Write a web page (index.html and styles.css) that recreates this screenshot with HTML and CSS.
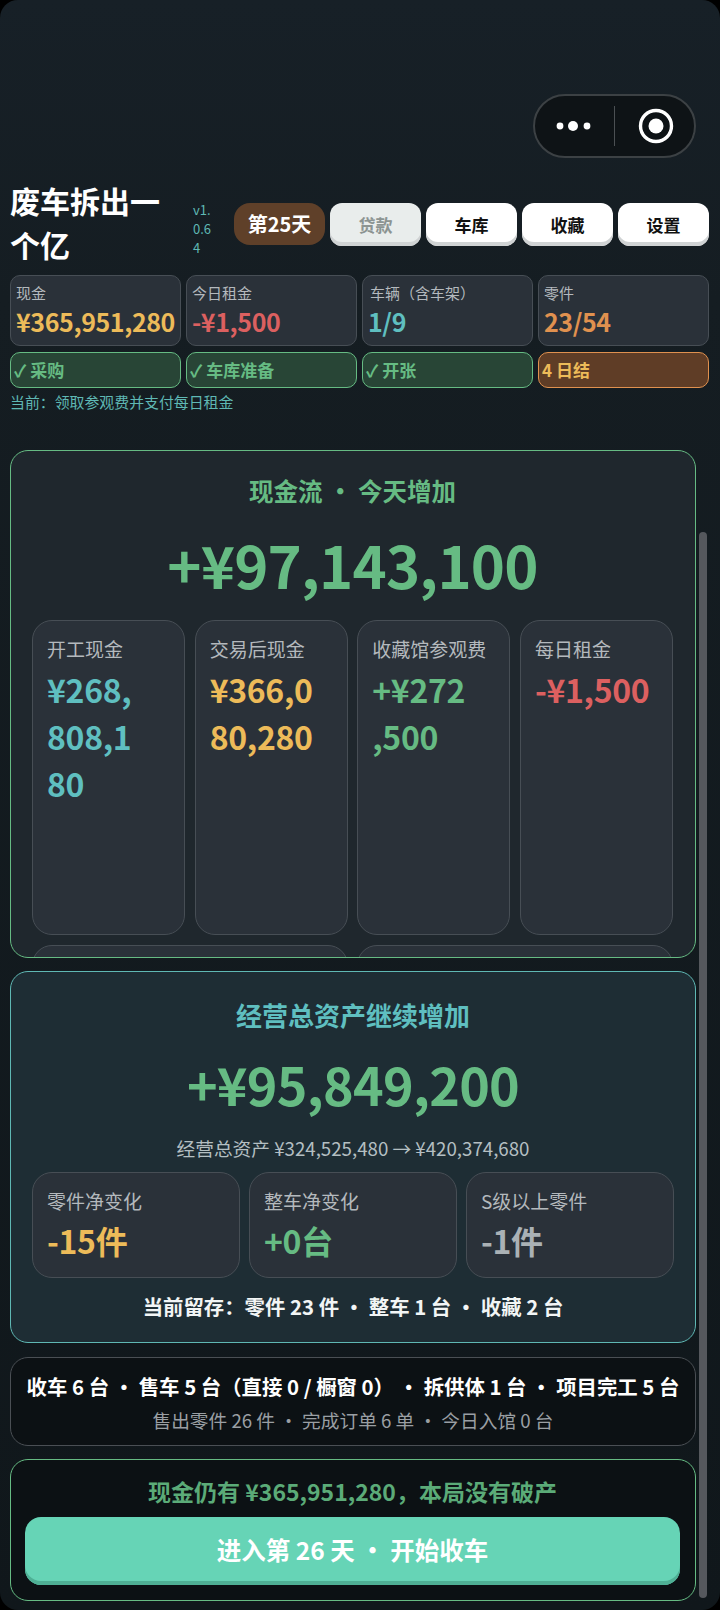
FILE: index.html
```html
<!DOCTYPE html>
<html lang="zh">
<head>
  <meta charset="utf-8">
  <title>废车拆出一个亿</title>
  <link rel="stylesheet" href="styles.css">
</head>
<body>
  <div class="app">
    <div class="capsule">
      <svg class="capsule-dots" width="36" height="14" viewBox="0 0 36 14"><circle cx="4" cy="7" r="3.4"/><circle cx="17" cy="7" r="5"/><circle cx="31" cy="7" r="3.4"/></svg>
      <span class="capsule-line"></span>
      <svg class="capsule-ring" width="36" height="36" viewBox="0 0 36 36"><circle cx="18" cy="18" r="15.5" fill="none" stroke="#fff" stroke-width="3.4"/><circle cx="18" cy="18" r="7.5" fill="#fff"/></svg>
    </div>

    <header class="topbar">
      <h1 class="title">废车拆出一个亿</h1>
      <span class="version">v1.0.64</span>
      <span class="day">第25天</span>
      <button class="top-btn off">贷款</button>
      <button class="top-btn">车库</button>
      <button class="top-btn">收藏</button>
      <button class="top-btn">设置</button>
    </header>

    <div class="stats">
      <div class="stat"><div class="stat-label">现金</div><div class="stat-value yellow">¥365,951,280</div></div>
      <div class="stat"><div class="stat-label">今日租金</div><div class="stat-value red">-¥1,500</div></div>
      <div class="stat"><div class="stat-label indent">车辆（含车架）</div><div class="stat-value teal">1/9</div></div>
      <div class="stat"><div class="stat-label">零件</div><div class="stat-value orange">23/54</div></div>
    </div>

    <div class="steps">
      <div class="step done">✓ 采购</div>
      <div class="step done">✓ 车库准备</div>
      <div class="step done">✓ 开张</div>
      <div class="step now">4 日结</div>
    </div>
    <p class="current">当前：领取参观费并支付每日租金</p>

    <section class="panel cash">
      <h2 class="panel-title green">现金流 · 今天增加</h2>
      <div class="big green">+¥97,143,100</div>
      <div class="cash-grid">
        <div class="card"><div class="card-label">开工现金</div><div class="card-value teal">¥268,<br>808,1<br>80</div></div>
        <div class="card"><div class="card-label">交易后现金</div><div class="card-value yellow">¥366,0<br>80,280</div></div>
        <div class="card"><div class="card-label">收藏馆参观费</div><div class="card-value green">+¥272<br>,500</div></div>
        <div class="card"><div class="card-label">每日租金</div><div class="card-value red">-¥1,500</div></div>
        <div class="card wide"></div>
        <div class="card wide"></div>
      </div>
    </section>

    <section class="panel assets">
      <h2 class="panel-title teal">经营总资产继续增加</h2>
      <div class="big small-big green">+¥95,849,200</div>
      <p class="assets-sub">经营总资产 ¥324,525,480 → ¥420,374,680</p>
      <div class="assets-grid">
        <div class="card"><div class="card-label">零件净变化</div><div class="card-value yellow">-15件</div></div>
        <div class="card"><div class="card-label">整车净变化</div><div class="card-value green">+0台</div></div>
        <div class="card"><div class="card-label">S级以上零件</div><div class="card-value grey">-1件</div></div>
      </div>
      <p class="assets-foot">当前留存：零件 23 件 · 整车 1 台 · 收藏 2 台</p>
    </section>

    <section class="panel summary">
      <p class="summary-main">收车 6 台 · 售车 5 台（直接 0 / 橱窗 0） · 拆供体 1 台 · 项目完工 5 台</p>
      <p class="summary-sub">售出零件 26 件 · 完成订单 6 单 · 今日入馆 0 台</p>
    </section>

    <section class="panel next">
      <p class="next-note">现金仍有 ¥365,951,280，本局没有破产</p>
      <button class="next-btn">进入第 26 天 · 开始收车</button>
    </section>

    <div class="scrollbar"></div>
  </div>
</body>
</html>
```

FILE: styles.css
```css
* {
  box-sizing: border-box;
}
html, body {
  margin: 0;
  padding: 0;
  background: #000;
}
body {
  font-family: "Noto Sans CJK SC", "Noto Sans", sans-serif;
  color: #fff;
}
p, h1, h2 {
  margin: 0;
}
.app {
  position: relative;
  width: 720px;
  height: 1610px;
  padding: 94px 10px 0;
  overflow: hidden;
  border-radius: 18px;
  background: linear-gradient(#172027 0, #151d22 300px, #10171b 100%);
}
.capsule {
  display: flex;
  align-items: center;
  width: 163px;
  height: 64px;
  margin-left: 523px;
  padding: 0 0 0 21px;
  background: #0e1316;
  border: 2px solid #3c4144;
  border-radius: 32px;
}
.capsule-dots {
  fill: #fff;
}
.capsule-line {
  width: 1px;
  height: 40px;
  margin: 0 23px 0 22px;
  background: #4b5053;
}
.topbar {
  display: flex;
  align-items: center;
  height: 88px;
  margin-top: 22px;
}
.title {
  width: 171px;
  margin-bottom: 4px;
  padding-right: 10px;
  font-size: 30px;
  line-height: 44px;
  font-weight: 700;
}
.version {
  width: 30px;
  margin: 8px 11px 0 12px;
  padding-right: 8px;
  font-size: 13px;
  line-height: 19px;
  color: #5fb8b4;
  word-break: break-all;
}
.day {
  width: 91px;
  height: 42px;
  margin-right: 5px;
  line-height: 42px;
  text-align: center;
  font-size: 20px;
  font-weight: 700;
  color: #fff;
  background: #5f4029;
  border-radius: 16px;
}
.top-btn {
  width: 91px;
  height: 43px;
  margin-right: 5px;
  padding: 0;
  font-family: inherit;
  font-size: 17px;
  font-weight: 700;
  color: #111;
  background: #fff;
  border: none;
  border-radius: 12px;
  box-shadow: inset 0 -4px 0 #d0d3d4;
}
.top-btn:last-child {
  margin-right: 0;
}
.top-btn.off {
  color: #8c9492;
  background: #e9edec;
}
.stats, .steps {
  display: grid;
  grid-template-columns: repeat(4, 1fr);
  gap: 5px;
  width: 699px;
}
.stats {
  margin-top: 7px;
}
.stat {
  height: 71px;
  padding: 6px 0 0 5px;
  background: #2a3139;
  border: 1.5px solid #474e55;
  border-radius: 10px;
}
.stat-label {
  font-size: 15px;
  line-height: 22px;
  color: #b4b9bd;
}
.stat-label.indent {
  padding-left: 2px;
}
.stat-value {
  font-size: 25px;
  line-height: 34px;
  font-weight: 700;
  letter-spacing: -0.4px;
  white-space: nowrap;
}
.steps {
  margin-top: 6px;
}
.step {
  height: 36px;
  padding-left: 3px;
  font-size: 17px;
  line-height: 33px;
  font-weight: 700;
  border-radius: 10px;
  border: 1.5px solid;
}
.step.done {
  color: #66bb83;
  background: #284536;
  border-color: #66bb83;
}
.step.now {
  color: #edbb59;
  background: #5f3d26;
  border-color: #e0914f;
}
.current {
  margin-top: 4px;
  font-size: 14.9px;
  line-height: 20px;
  color: #5fb8b4;
}
.panel {
  width: 686px;
  border: 1.5px solid;
  border-radius: 18px;
}
.cash {
  height: 508px;
  margin-top: 38px;
  padding: 0 22px 0 21px;
  overflow: hidden;
  background: #1f272d;
  border-color: #66bb83;
}
.panel-title {
  text-align: center;
  font-size: 24.5px;
  font-weight: 700;
}
.cash .panel-title {
  margin-top: 22px;
  line-height: 36px;
}
.big {
  text-align: center;
  font-size: 58px;
  line-height: 80px;
  font-weight: 700;
  letter-spacing: -0.8px;
}
.cash .big {
  margin-top: 15px;
}
.cash-grid {
  display: grid;
  grid-template-columns: repeat(4, 1fr);
  grid-auto-rows: 315px;
  gap: 10px 9.5px;
  margin-top: 16px;
}
.card {
  padding: 14px 14px 0;
  background: #2a3139;
  border: 1.5px solid #474e55;
  border-radius: 20px;
}
.card.wide {
  grid-column: span 2;
}
.cash-grid .card:nth-child(n+5) {
  height: 60px;
}
.card-label {
  font-size: 19px;
  line-height: 27px;
  color: #b4b9bd;
}
.card-value {
  margin-top: 4px;
  font-size: 32px;
  line-height: 47px;
  font-weight: 700;
  letter-spacing: -0.3px;
}
.assets {
  height: 372px;
  margin-top: 13px;
  padding: 0 21px;
  background: #1e2d34;
  border-color: #5fb8b4;
}
.assets .panel-title {
  margin-top: 25px;
  font-size: 26px;
  line-height: 36px;
}
.small-big {
  margin-top: 11px;
  font-size: 52px;
  letter-spacing: -0.7px;
}
.assets-sub {
  margin-top: 10px;
  text-align: center;
  font-size: 18.7px;
  line-height: 28px;
  color: #b4bfc2;
}
.assets-grid {
  display: grid;
  grid-template-columns: repeat(3, 1fr);
  gap: 9px;
  margin-top: 10px;
}
.assets-grid .card {
  height: 106px;
  padding-top: 14px;
}
.assets-grid .card-value {
  margin-top: 3px;
  font-size: 32px;
}
.assets-foot {
  margin-top: 13px;
  text-align: center;
  font-size: 20.4px;
  line-height: 30px;
  font-weight: 700;
  color: #f2f5f5;
}
.summary {
  height: 89px;
  margin-top: 14px;
  padding-top: 13px;
  text-align: center;
  background: #0c1114;
  border-color: #4a4f54;
}
.summary-main {
  font-size: 20.4px;
  line-height: 30px;
  font-weight: 700;
  white-space: nowrap;
}
.summary-sub {
  margin-top: 5px;
  font-size: 18.7px;
  line-height: 27px;
  color: #9a9fa3;
}
.next {
  height: 142px;
  margin-top: 13px;
  padding: 15px 15px 0 14px;
  text-align: center;
  background: #0c1114;
  border-color: #66bb83;
}
.next-note {
  font-size: 23px;
  line-height: 33px;
  font-weight: 700;
  color: #5bab78;
}
.next-btn {
  display: block;
  width: 100%;
  height: 68px;
  margin-top: 9px;
  padding: 0 0 4px;
  font-family: inherit;
  font-size: 24.5px;
  font-weight: 700;
  color: #fff;
  background: #66d4b6;
  border: none;
  border-radius: 16px;
  box-shadow: inset 0 -4px 0 #4fb095;
}
.green { color: #66bb83; }
.teal { color: #5fbfc0; }
.yellow { color: #edbb59; }
.red { color: #dc6060; }
.orange { color: #e0914f; }
.grey { color: #aab1b5; }
.scrollbar {
  position: absolute;
  top: 532px;
  left: 699px;
  width: 8px;
  height: 1066px;
  background: #55585d;
  border-radius: 4px;
}
```
